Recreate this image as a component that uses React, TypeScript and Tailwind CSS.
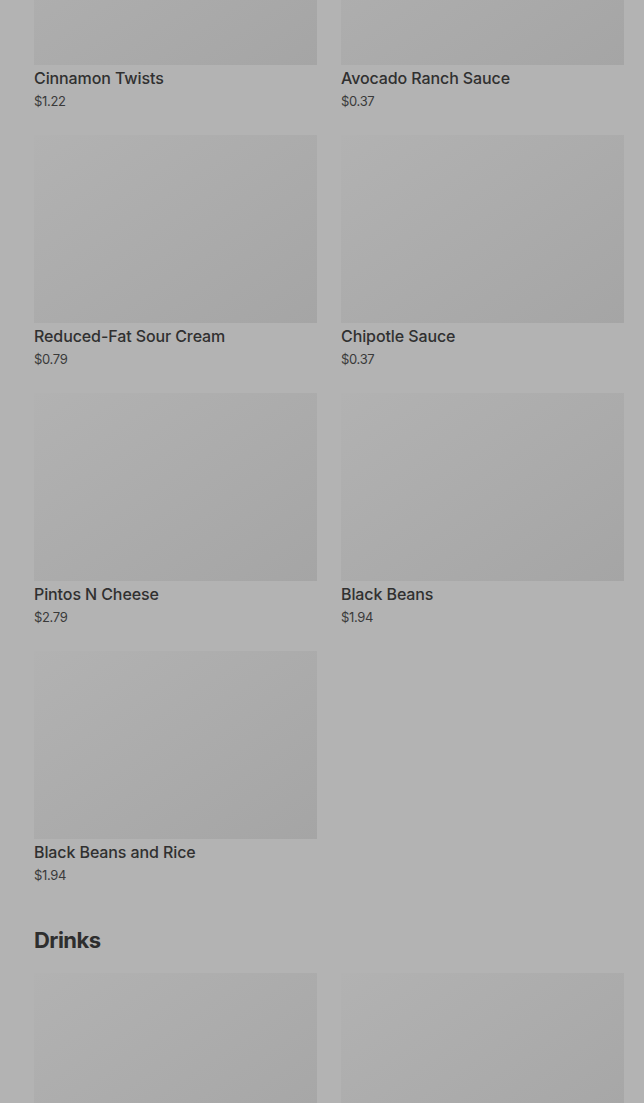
type Item = { name: string; price: string };

const SIDES: Item[] = [
  { name: "Cinnamon Twists", price: "$1.22" },
  { name: "Avocado Ranch Sauce", price: "$0.37" },
  { name: "Reduced-Fat Sour Cream", price: "$0.79" },
  { name: "Chipotle Sauce", price: "$0.37" },
  { name: "Pintos N Cheese", price: "$2.79" },
  { name: "Black Beans", price: "$1.94" },
  { name: "Black Beans and Rice", price: "$1.94" },
];

function Thumb() {
  return <div className="h-[188px] w-full bg-linear-to-br from-[#b2b2b2] to-[#a5a5a5]" />;
}

function ItemCard({ item }: { item: Item }) {
  return (
    <div className="flex flex-col">
      <Thumb />
      <div className="mt-[3px] text-[16px] leading-[20px] font-medium tracking-[-0.1px] text-[#303030]">{item.name}</div>
      <div className="mt-[4px] text-[13px] leading-[18px] text-[#3a3a3a] tracking-tight">{item.price}</div>
    </div>
  );
}

export default function App() {
  return (
    <div
      className="h-[1103px] overflow-hidden bg-[#b3b3b3] pl-[34px] pr-[20px]"
      style={{ fontFamily: "Inter, 'Liberation Sans', sans-serif" }}
    >
      <div className="-mt-[123px] grid grid-cols-2 gap-x-[24px] gap-y-[25px]">
        {SIDES.map(s => <ItemCard key={s.name} item={s} />)}
      </div>

      <h2 className="mt-[40px] text-[22px] leading-[32px] font-bold tracking-tight text-[#2e2e2e]">Drinks</h2>

      {/* drinks row is cut by the viewport; only the thumbnails show */}
      <div className="mt-[17px] grid grid-cols-2 gap-x-[24px]">
        <Thumb />
        <Thumb />
      </div>
    </div>
  );
}
